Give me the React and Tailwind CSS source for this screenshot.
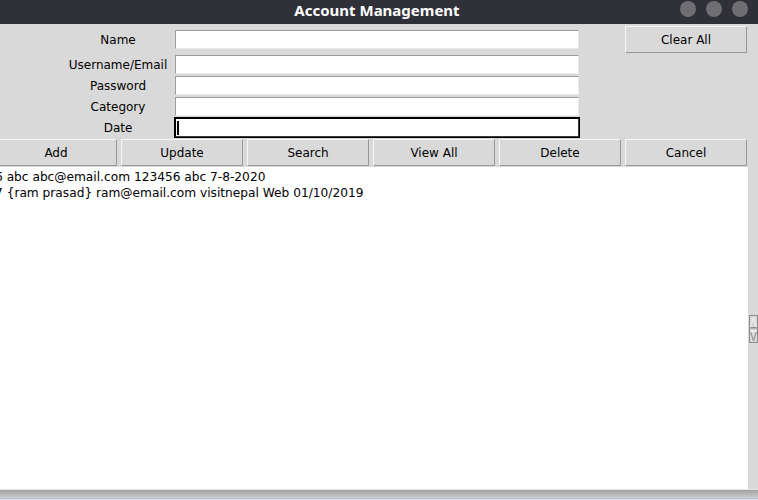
import React from 'react';

const labels = ['Username/Email', 'Password', 'Category', 'Date'];
const buttons = ['Add', 'Update', 'Search', 'View All', 'Delete', 'Cancel'];
const records = [
    '6 abc abc@email.com 123456 abc 7-8-2020',
    '7 {ram prasad} ram@email.com visitnepal Web 01/10/2019',
];

function Entry({ focused }) {
    return (
        <div className={`h-[21px] w-[406px] border ${focused ? 'border-black' : 'border-transparent'}`}>
            <div
                className={`relative h-full w-full bg-white border ${focused
                    ? 'border-t-black border-l-black border-b-[#3a3a3a] border-r-[#3a3a3a]'
                    : 'border-t-[#9c9c9c] border-l-[#9c9c9c] border-b-[#ececec] border-r-[#ececec]'
                    }`}
            >
                {focused && <div className="absolute left-[1px] top-[2px] h-[14px] w-[2px] bg-black" />}
            </div>
        </div>
    );
}

function TkButton({ label }) {
    return (
        <div className="h-[27px] w-[122px] bg-[#d9d9d9] border border-t-[#f6f6f6] border-l-[#f6f6f6] border-b-[#979797] border-r-[#979797] flex items-center justify-center text-[12px] text-black">
            {label}
        </div>
    );
}

function ScrollNub() {
    return (
        <svg width="9" height="28" viewBox="0 0 9 28">
            <rect x="0.5" y="0.5" width="8" height="27" fill="#d9d9d9" stroke="#8a8a8a" />
            <line x1="1" y1="14" x2="8" y2="14" stroke="#8a8a8a" />
            <line x1="1" y1="15" x2="8" y2="15" stroke="#f4f4f4" />
            <polyline points="1.5,12 4.5,2.5 7.5,12" fill="none" stroke="#f4f4f4" />
            <line x1="1.5" y1="12.5" x2="7.5" y2="12.5" stroke="#8a8a8a" />
            <polyline points="1.5,16.5 4.5,26 7.5,16.5" fill="none" stroke="#8a8a8a" />
            <line x1="1.5" y1="16.5" x2="7.5" y2="16.5" stroke="#f4f4f4" />
        </svg>
    );
}

export default function App() {
    return (
        <div
            className="w-[758px] h-[500px] overflow-hidden flex flex-col bg-[#d9d9d9] text-black"
            style={{ fontFamily: '"DejaVu Sans", sans-serif' }}
        >
            {/* Title bar */}
            <div className="relative h-[24px] shrink-0 bg-[#2f3038] flex items-center justify-center">
                <span
                    className="text-white font-bold text-[15px] leading-none -mt-[4px] -ml-[4px]"
                    style={{ fontFamily: '"Noto Sans", sans-serif' }}
                >
                    Account Management
                </span>
                <div className="absolute right-[10px] top-[1px] flex gap-[10px]">
                    <div className="w-[16px] h-[16px] rounded-full bg-[#6f6f73]" />
                    <div className="w-[16px] h-[16px] rounded-full bg-[#6f6f73]" />
                    <div className="w-[16px] h-[16px] rounded-full bg-[#6f6f73]" />
                </div>
            </div>

            {/* Form */}
            <div className="h-[114px] shrink-0 flex text-[12px]">
                <div className="w-[580px] flex flex-col">
                    <div className="h-[30px] flex items-start pt-[5px]">
                        <div className="ml-[62px] w-[112px] h-[21px] flex items-center justify-center">Name</div>
                        <Entry />
                    </div>
                    {labels.map((l) => (
                        <div key={l} className="h-[21px] flex items-center">
                            <div className="ml-[62px] w-[112px] h-[21px] flex items-center justify-center">{l}</div>
                            <Entry focused={l === 'Date'} />
                        </div>
                    ))}
                </div>
                <div className="ml-[44px] pt-[1px]">
                    <div className="border border-transparent">
                        <TkButton label="Clear All" />
                    </div>
                </div>
            </div>

            {/* Buttons */}
            <div className="h-[29px] shrink-0 -ml-[7px] flex">
                {buttons.map((b) => (
                    <div key={b} className="w-[126px] shrink-0 px-[2px] py-[1px]">
                        <TkButton label={b} />
                    </div>
                ))}
            </div>

            {/* List */}
            <div className="h-[322px] shrink-0 flex">
                <div className="w-[748px] bg-white pt-[2px] text-[12.2px] leading-[16px] overflow-hidden whitespace-nowrap">
                    {records.map((r) => (
                        <div key={r} className="-ml-[5px]">{r}</div>
                    ))}
                </div>
                <div className="flex-1 flex flex-col pt-[148px] pl-[1px]">
                    <ScrollNub />
                </div>
            </div>

            {/* Desktop shadow under window */}
            <div className="h-[1px] shrink-0 bg-[#e4e4e4]" />
            <div className="h-[7px] shrink-0 bg-gradient-to-b from-[#a3a3a3] to-[#c6c6c6]" />
            <div className="h-[1px] shrink-0 bg-[#c9ccd2]" />
            <div className="h-[1px] shrink-0 bg-[#b3bfd3]" />
            <div className="h-[1px] shrink-0 bg-[#d9dee6]" />
        </div>
    );
}
